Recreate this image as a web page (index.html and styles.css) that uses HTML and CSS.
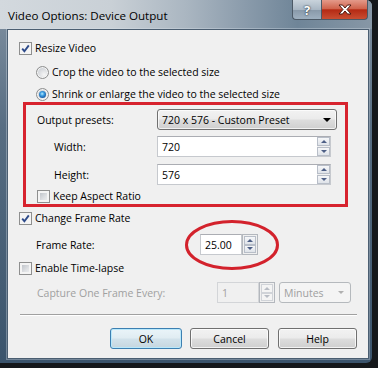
FILE: index.html
```html
<!DOCTYPE html>
<html lang="en">
<head>
  <meta charset="UTF-8" />
  <title>Video Options: Device Output</title>
  <link rel="stylesheet" href="styles.css">
</head>
<body>
  <div class="window">
    <div class="titlebar">
      <span class="title">Video Options: Device Output</span>
      <div class="caption">
        <div class="cap-btn cap-help">?</div>
        <div class="cap-btn cap-close">
          <svg width="14" height="11" viewBox="0 0 14 11"><path d="M1 1h3.5L7 4 9.5 1H13L9 5.5 13 10H9.5L7 7 4.5 10H1L5 5.5Z" fill="#fff" stroke="#4a1a12" stroke-width="1"/></svg>
        </div>
      </div>
    </div>

    <div class="client">
      <!-- resize -->
      <div class="row r-resize">
        <span class="check on"><svg width="9" height="9" viewBox="0 0 9 9"><path d="M1.2 4.6 3.4 7.2 7.8 1.4" fill="none" stroke="#2d4a8a" stroke-width="1.9"/></svg></span>
        <span>Resize Video</span>
      </div>
      <div class="row r-crop indent">
        <span class="radio"></span>
        <span>Crop the video to the selected size</span>
      </div>
      <div class="row r-shrink indent">
        <span class="radio on"></span>
        <span>Shrink or enlarge the video to the selected size</span>
      </div>

      <div class="presets-box">
        <div class="frow r-presets">
          <span class="lbl lbl-main">Output presets:</span>
          <div class="combo"><span>720 x 576 - Custom Preset</span><i class="arrow"></i></div>
        </div>
        <div class="frow r-width">
          <span class="lbl lbl-sub">Width:</span>
          <div class="field">
            <span class="val">720</span>
            <div class="spin small"><span class="up"></span><span class="down"></span></div>
          </div>
        </div>
        <div class="frow r-height">
          <span class="lbl lbl-sub">Height:</span>
          <div class="field">
            <span class="val">576</span>
            <div class="spin small"><span class="up"></span><span class="down"></span></div>
          </div>
        </div>
        <div class="row r-aspect">
          <span class="check"></span>
          <span>Keep Aspect Ratio</span>
        </div>
      </div>

      <div class="row r-rate">
        <span class="check on"><svg width="9" height="9" viewBox="0 0 9 9"><path d="M1.2 4.6 3.4 7.2 7.8 1.4" fill="none" stroke="#2d4a8a" stroke-width="1.9"/></svg></span>
        <span>Change Frame Rate</span>
      </div>
      <div class="frow r-fps indent">
        <span class="lbl lbl-fps">Frame Rate:</span>
        <div class="updown">
          <span class="box">25.00</span>
          <div class="spin"><span class="up"></span><span class="down"></span></div>
        </div>
      </div>
      <div class="row r-lapse">
        <span class="check"></span>
        <span>Enable Time-lapse</span>
      </div>
      <div class="frow r-capture indent disabled">
        <span class="lbl lbl-cap">Capture One Frame Every:</span>
        <div class="updown">
          <span class="box">1</span>
          <div class="spin"><span class="up"></span><span class="down"></span></div>
        </div>
        <div class="combo off"><span>Minutes</span><i class="arrow"></i></div>
      </div>

      <div class="sep"></div>

      <div class="buttons">
        <button class="btn default">OK</button>
        <button class="btn">Cancel</button>
        <button class="btn">Help</button>
      </div>

      <!-- annotation round the frame rate -->
      <svg class="ring" width="98" height="54" viewBox="0 0 98 54"><ellipse cx="49" cy="27" rx="45.5" ry="23.5" fill="none" stroke="#d3222c" stroke-width="3"/></svg>
    </div>
  </div>
</body>
</html>
```

FILE: styles.css
```css
body {
  margin: 0;
  width: 378px;
  height: 368px;
  overflow: hidden;
  background: #15181b;
  font-family: 'Open Sans', 'Noto Sans', sans-serif;
  font-size: 10.5px;
  color: #000;
}

.window {
  width: 372px;
  height: 363px;
  box-sizing: border-box;
  padding: 0 3px 4px 7px;
  display: flex;
  flex-direction: column;
  background: linear-gradient(to bottom, #8191a1 0%, #576d82 35%, #3b546c 100%);
  border-radius: 0 6px 6px 0;
}

.titlebar {
  height: 29px;
  margin: 0 -3px 0 -7px;
  padding-left: 8px;
  display: flex;
  align-items: flex-start;
  justify-content: space-between;
  background: linear-gradient(to right, #d3d9de 0%, #c9d0d6 30%, #aab6c1 50%, #8a9bab 66%, #6f8598 80%, #8797a6 100%);
  border-radius: 0 6px 0 0;
}

.title {
  font-size: 11.6px;
  line-height: 14px;
  margin-top: 9px;
  color: #000;
}

.caption {
  display: flex;
  margin-right: 4px;
}

.cap-btn {
  height: 20px;
  box-sizing: border-box;
  display: flex;
  align-items: center;
  justify-content: center;
  border: 1px solid #4c5966;
  border-top: none;
}

.cap-help {
  width: 29px;
  border-radius: 0 0 0 4px;
  border-right: none;
  background: linear-gradient(to bottom, #c9d3dc 0%, #a9b7c4 50%, #8898a8 51%, #9eb0c0 100%);
  color: #fff;
  font-weight: bold;
  font-size: 13px;
  text-shadow: 0 0 2px #2c3a48, 0 0 1px #2c3a48;
}

.cap-close {
  width: 47px;
  border-radius: 0 0 4px 0;
  background: linear-gradient(to bottom, #e49a8a 0%, #d0644d 45%, #b52a14 52%, #c94e32 100%);
}

.client {
  flex: 1;
  position: relative;
  border: 1px solid #4b5e71;
  box-shadow: 0 0 0 1px rgba(220, 230, 238, 0.35);
  background: #f0f0f0;
  padding-left: 11px;
}

/* rows */
.row, .frow {
  display: flex;
  align-items: center;
}

.row {
  height: 16px;
}

.frow {
  height: 21px;
}

.indent {
  padding-left: 17px;
}

.r-resize { margin-top: 10px; }
.r-crop { margin-top: 8px; }
.r-shrink { margin-top: 6px; }
.r-rate { margin-top: 3px; }
.r-fps { margin-top: 8px; }
.r-lapse { margin-top: 5px; }
.r-capture { margin-top: 6px; padding-left: 18px; }

.presets-box {
  width: 325px;
  height: 105px;
  box-sizing: border-box;
  margin-left: 4px;
  border: 3px solid #d7232e;
  padding-left: 11px;
}

.r-presets { margin-top: 4px; }
.r-width { margin-top: 6px; }
.r-height { margin-top: 7px; }
.r-aspect { margin-top: 3px; }

.lbl { flex: none; }
.lbl-main { width: 120px; }
.lbl-sub { width: 103px; padding-left: 17px; }
.lbl-fps { width: 164px; }
.lbl-cap { width: 180px; }

.disabled { color: #a0a0a0; }

/* check boxes and radios */
.check {
  width: 13px;
  height: 13px;
  box-sizing: border-box;
  flex: none;
  margin-right: 3px;
  border: 1px solid #8e8f8f;
  background: linear-gradient(135deg, #b4b9c0 0%, #dfe1e4 60%, #f3f3f4 100%);
  box-shadow: inset 0 0 0 2px #f4f4f4;
  display: flex;
  align-items: center;
  justify-content: center;
}

.check.on {
  background: #f4f4f4;
}

.radio {
  width: 13px;
  height: 13px;
  box-sizing: border-box;
  flex: none;
  margin-right: 3px;
  border: 1px solid #8e8f8f;
  border-radius: 50%;
  background: radial-gradient(circle at 65% 70%, #f6f6f6 0%, #d4d7db 60%, #bfc3c8 100%);
  box-shadow: inset 0 0 0 1px #f5f5f5;
  display: flex;
  align-items: center;
  justify-content: center;
}

.radio.on::after {
  content: '';
  width: 7px;
  height: 7px;
  border-radius: 50%;
  background: radial-gradient(circle at 45% 40%, #b7ecff 0%, #3a9ce0 35%, #1a5fa8 70%, #0e3d78 100%);
}

/* inputs */
.combo {
  width: 180px;
  height: 21px;
  box-sizing: border-box;
  display: flex;
  align-items: center;
  justify-content: space-between;
  padding: 0 5px 0 4px;
  border: 1px solid #707070;
  border-radius: 3px;
  background: linear-gradient(to bottom, #f2f2f2 0%, #ebebeb 48%, #dddddd 52%, #cfcfcf 100%);
  box-shadow: inset 0 0 0 1px rgba(255, 255, 255, 0.7);
}

.arrow {
  width: 0;
  height: 0;
  border-left: 4px solid transparent;
  border-right: 4px solid transparent;
  border-top: 4px solid #000;
}

.combo.off {
  width: 72px;
  margin-left: 4px;
  border-color: #b5b9bd;
  background: #f4f4f4;
  box-shadow: none;
  padding-right: 6px;
}

.combo.off .arrow {
  border-left-width: 3px;
  border-right-width: 3px;
  border-top: 3px solid #b0b0b0;
}

.field {
  width: 174px;
  height: 21px;
  box-sizing: border-box;
  display: flex;
  align-items: center;
  border: 1px solid #c6c9ce;
  border-top-color: #abadb3;
  background: #fff;
}

.val {
  flex: 1;
  padding-left: 4px;
}

.spin {
  display: flex;
  flex-direction: column;
  justify-content: space-between;
  width: 16px;
  height: 21px;
  box-sizing: border-box;
  padding: 1px;
  border: 1px solid #b3b7bd;
  background: #f0f0f0;
}

.spin span {
  height: 8px;
  display: flex;
  align-items: center;
  justify-content: center;
  border: 1px solid #b8bec8;
  background: linear-gradient(to bottom, #f6f7f9, #dfe3e9);
}

.spin .up::after, .spin .down::after {
  content: '';
  border-left: 3px solid transparent;
  border-right: 3px solid transparent;
}

.spin .up::after { border-bottom: 3px solid #4d5f86; }
.spin .down::after { border-top: 3px solid #4d5f86; }

.spin.small {
  width: 13px;
  height: 19px;
  border: none;
  padding: 0;
  margin-right: 0;
}

.spin.small span { height: 7px; }

.updown {
  display: flex;
  align-items: stretch;
  height: 21px;
}

.updown .box {
  width: 42px;
  box-sizing: border-box;
  padding-left: 4px;
  display: flex;
  align-items: center;
  border: 1px solid #c6c9ce;
  border-top-color: #abadb3;
  background: #fff;
}

.disabled .updown .box {
  background: #f0f0f0;
  border-color: #d3d5d8;
}

.disabled .spin span {
  border-color: #d0d3d8;
  background: #f4f4f4;
}

.disabled .spin .up::after { border-bottom-color: #b8bcc4; }
.disabled .spin .down::after { border-top-color: #b8bcc4; }

.sep {
  width: 337px;
  margin: 11px 0 0 1px;
  border-top: 1px solid #a0a0a0;
  border-bottom: 1px solid #fff;
}

/* buttons */
.buttons {
  display: flex;
  justify-content: flex-end;
  gap: 8px;
  margin: 12px 11px 0 0;
}

.btn {
  width: 79px;
  height: 21px;
  padding: 0;
  font: inherit;
  color: #000;
  border: 1px solid #707070;
  border-radius: 3px;
  background: linear-gradient(to bottom, #f2f2f2 0%, #ebebeb 48%, #dddddd 52%, #cfcfcf 100%);
  box-shadow: inset 0 0 0 1px rgba(255, 255, 255, 0.75);
}

.btn.default {
  width: 72px;
  border-color: #3c7fb1;
  box-shadow: inset 0 0 0 1px #b9e8fb;
  background: linear-gradient(to bottom, #eaf4f9 0%, #e0ecf2 48%, #d2e2eb 52%, #c6d6df 100%);
}

.btn + .btn + .btn {
  margin-left: 1px;
}

.ring {
  position: absolute;
  left: 175px;
  top: 188px;
}
```
